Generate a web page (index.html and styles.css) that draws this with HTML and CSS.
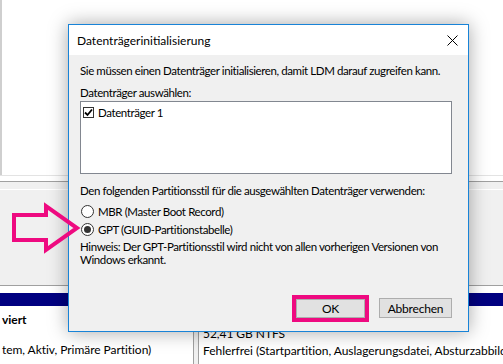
FILE: index.html
```html
<!DOCTYPE html>
<html lang="de">
<head>
    <meta charset="UTF-8">
    <meta name="viewport" content="width=device-width, initial-scale=1.0">
    <title>Datenträgerinitialisierung</title>
    <link rel="stylesheet" href="styles.css">
</head>
<body>
    <div class="desk">
        <!-- Disk management window behind the dialog -->
        <div class="back-top"></div>
        <div class="back-rule"></div>
        <div class="back-panel"><div class="back-panel-line"></div></div>
        <div class="back-gap"></div>
        <div class="back-bar"></div>
        <div class="back-rows">
            <div class="back-col left-col">
                <div class="row bold">viert</div>
                <div class="row"></div>
                <div class="row">tem, Aktiv, Primäre Partition)</div>
            </div>
            <div class="divider"></div>
            <div class="back-col right-col">
                <div class="row">52,41 GB NTFS</div>
                <div class="row">Fehlerfrei (Startpartition, Auslagerungsdatei, Absturzabbild, Primäre Partition)</div>
            </div>
        </div>

        <!-- Dialog -->
        <div class="dialog">
            <div class="title-bar">
                <span class="title">Datenträgerinitialisierung</span>
                <span class="close">
                    <svg width="11" height="11" viewBox="0 0 11 11"><path d="M0.5 0.5 L10.5 10.5 M10.5 0.5 L0.5 10.5" stroke="#000" stroke-width="1" fill="none"/></svg>
                </span>
            </div>
            <div class="dialog-body">
                <p class="text intro">Sie müssen einen Datenträger initialisieren, damit LDM darauf zugreifen kann.</p>
                <p class="text select-label">Datenträger auswählen:</p>
                <div class="disk-list">
                    <div class="disk-item">
                        <span class="check">
                            <svg width="9" height="9" viewBox="0 0 9 9"><path d="M1 4.5 L3.5 7 L8 1.5" stroke="#000" stroke-width="1.8" fill="none"/></svg>
                        </span>
                        Datenträger 1
                    </div>
                </div>
                <p class="text style-label">Den folgenden Partitionsstil für die ausgewählten Datenträger verwenden:</p>
                <div class="radio-row"><span class="radio"></span>MBR (Master Boot Record)</div>
                <div class="radio-row"><span class="radio checked"></span>GPT (GUID-Partitionstabelle)</div>
                <p class="text hint">Hinweis: Der GPT-Partitionsstil wird nicht von allen vorherigen Versionen von<br>Windows erkannt.</p>
                <div class="buttons">
                    <button class="btn ok">OK</button>
                    <button class="btn cancel">Abbrechen</button>
                </div>
            </div>
        </div>

        <!-- Annotation arrow -->
        <svg class="arrow" width="72" height="52" viewBox="0 0 72 52">
            <polygon points="4,13 36,13 36,4 67,26 36,48 36,38 4,38" fill="none" stroke="#ee0a80" stroke-width="4" stroke-linejoin="miter"/>
        </svg>
    </div>
</body>
</html>
```

FILE: styles.css
```css
body {
    margin: 0;
    font-family: Lato, "Liberation Sans", sans-serif;
    font-size: 12px;
    color: #000;
}
.desk {
    position: relative;
    width: 503px;
    height: 364px;
    overflow: hidden;
    background-color: #fff;
}
.back-top {
    height: 175px;
    border-left: 2px solid #cfcfcf;
    box-sizing: border-box;
}
.back-rule {
    height: 6px;
    border-top: 1px solid #e3e3e3;
    box-sizing: border-box;
}
.back-panel {
    height: 104px;
    border-top: 1px solid #a0a0a0;
    background-color: #f0f0f0;
    box-sizing: border-box;
}
.back-panel-line {
    margin-top: 7px;
    height: 1px;
    background-color: #fff;
}
.back-gap {
    height: 8px;
    border-top: 1px solid #a0a0a0;
    box-sizing: border-box;
}
.back-bar {
    height: 13px;
    background-color: #000080;
}
.back-rows {
    display: flex;
    height: 58px;
    letter-spacing: -0.05px;
}
.back-col {
    white-space: nowrap;
    overflow: hidden;
}
.left-col {
    width: 193px;
    padding: 6px 0 0 2px;
    box-sizing: border-box;
    line-height: 15px;
}
.left-col .row {
    height: 15px;
}
.bold {
    font-weight: bold;
}
.divider {
    width: 4px;
    border-left: 1px solid #a0a0a0;
    border-right: 1px solid #a0a0a0;
    background-color: #f0f0f0;
}
.right-col {
    flex: 1;
    padding: 19px 0 0 4px;
    line-height: 17px;
}
.dialog {
    position: absolute;
    left: 68px;
    top: 24px;
    width: 401px;
    height: 308px;
    box-sizing: border-box;
    border: 1px solid #1883d7;
    background-color: #f0f0f0;
    box-shadow: 0 0 18px rgba(0, 0, 0, 0.35);
    display: flex;
    flex-direction: column;
}
.title-bar {
    height: 30px;
    background-color: #fff;
    display: flex;
    align-items: center;
    justify-content: space-between;
    padding: 0 10px 0 8px;
}
.close {
    display: flex;
    margin-top: 1px;
}
.dialog-body {
    flex: 1;
    display: flex;
    flex-direction: column;
    padding: 8px 16px 13px 11px;
    font-size: 11.5px;
    letter-spacing: -0.4px;
}
.text {
    margin: 0;
    line-height: 15px;
    white-space: nowrap;
}
.select-label {
    margin-top: 7px;
}
.disk-list {
    margin-top: 1px;
    height: 73px;
    box-sizing: border-box;
    border: 1px solid #828790;
    background-color: #fff;
    padding: 3px 2px;
}
.disk-item {
    display: flex;
    align-items: center;
    gap: 4px;
    line-height: 15px;
}
.check {
    width: 11px;
    height: 11px;
    box-sizing: border-box;
    border: 1px solid #333;
    background-color: #fff;
    display: flex;
    align-items: center;
    justify-content: center;
}
.style-label {
    margin-top: 9px;
}
.radio-row {
    display: flex;
    align-items: center;
    gap: 4px;
    height: 18px;
    padding-left: 1px;
}
.style-label + .radio-row {
    margin-top: 4px;
}
.radio {
    width: 13px;
    height: 13px;
    box-sizing: border-box;
    border: 1px solid #333;
    border-radius: 50%;
    background-color: #fff;
    display: flex;
    align-items: center;
    justify-content: center;
}
.radio.checked::after {
    content: "";
    width: 7px;
    height: 7px;
    border-radius: 50%;
    background-color: #333;
}
.hint {
    margin-top: 2px;
    line-height: 13px;
}
.buttons {
    margin-top: auto;
    display: flex;
    justify-content: flex-end;
    align-items: flex-start;
    gap: 14px;
}
.btn {
    font-family: inherit;
    font-size: 12px;
    letter-spacing: -0.2px;
    color: #000;
    background-color: #e1e1e1;
    border: 1px solid #adadad;
    padding: 0;
    height: 20px;
}
.ok {
    width: 69px;
    height: 19px;
    margin-top: 1px;
    outline: 4px solid #ee0a80;
}
.cancel {
    width: 73px;
}
.arrow {
    position: absolute;
    left: 10px;
    top: 202px;
}
```
